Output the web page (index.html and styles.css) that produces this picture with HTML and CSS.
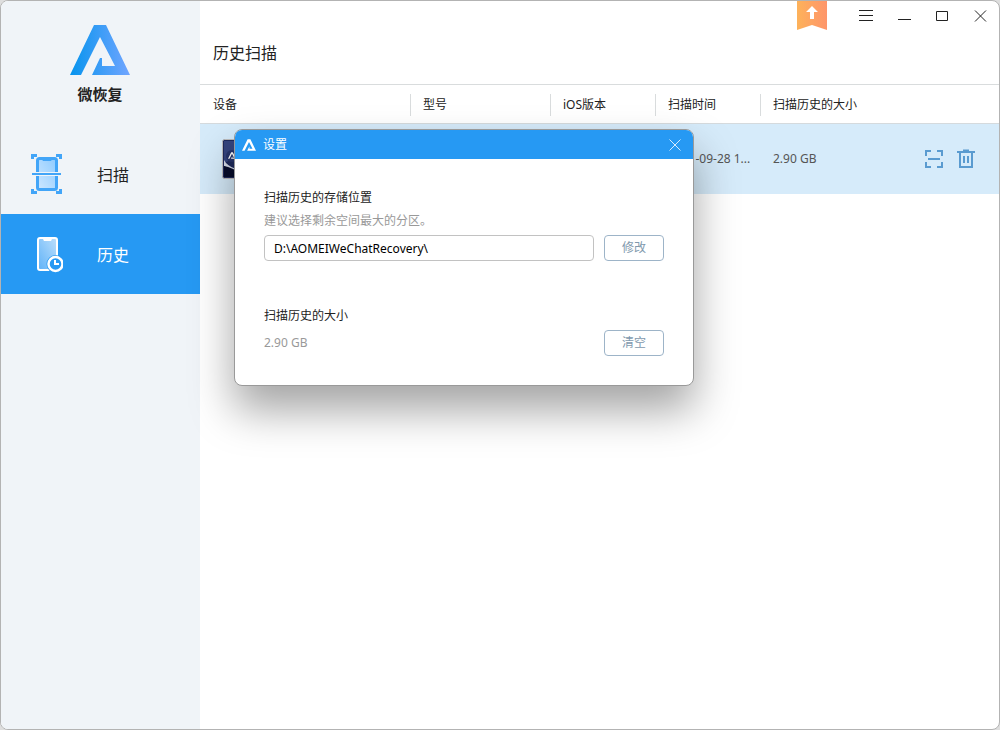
FILE: index.html
```html
<!DOCTYPE html>
<html lang="zh-CN">

<head>
    <meta charset="UTF-8">
    <title>微恢复</title>
    <link rel="stylesheet" href="styles.css">
</head>

<body>
    <svg width="0" height="0" class="defs">
        <defs>
            <symbol id="logo" viewBox="0 0 60 50">
                <path d="M24 0H36L60 50H22L31 33H32V41H45L30 12L11 50H0Z" />
            </symbol>
            <linearGradient id="blue" x1="0" y1="0" x2="1" y2="0">
                <stop offset="0" stop-color="#0694ee" />
                <stop offset="1" stop-color="#71a5ff" />
            </linearGradient>
            <linearGradient id="glass" x1="1" y1="0" x2="0" y2="1">
                <stop offset="0" stop-color="#8ecbff" />
                <stop offset="1" stop-color="#cde7ff" />
            </linearGradient>
            <linearGradient id="glass2" x1="1" y1="0" x2="0" y2="1">
                <stop offset="0" stop-color="#bcdffc" />
                <stop offset="1" stop-color="#5fb2f8" />
            </linearGradient>
            <linearGradient id="orange" x1="0" y1="0" x2="1" y2="0">
                <stop offset="0" stop-color="#fdb25a" />
                <stop offset="1" stop-color="#fe956a" />
            </linearGradient>
        </defs>
    </svg>

    <div class="window">
        <aside class="sidebar">
            <div class="brand">
                <svg width="60" height="50" fill="url(#blue)" viewBox="0 0 60 50">
                    <path d="M24 0H36L60 50H22L30 33H32V41H45L30 12L11 50H0Z" />
                </svg>
                <div class="brand_name">微恢复</div>
            </div>
            <nav>
                <a href="#" class="nav_item">
                    <svg width="32" height="40" viewBox="0 0 32 40">
                        <path d="M0 0H6V3H3V5H0ZM25 0H31V5H28V3H25ZM0 40H6V37H3V35H0ZM25 40H31V35H28V37H25Z" fill="#42a5f8" />
                        <rect x="6.500" y="4.500" width="19" height="31" rx="2" fill="url(#glass)" stroke="#42a5f8" stroke-width="3" />
                        <path d="M10 4H22L20 7H12Z" fill="#42a5f8" />
                        <path d="M4 18H28V22H4Z" fill="#f0f4f8" />
                        <path d="M1 19H30V21H1Z" fill="#42a5f8" />
                    </svg>
                    <span>扫描</span>
                </a>
                <a href="#" class="nav_item active">
                    <svg width="32" height="40" viewBox="0 0 32 40">
                        <rect x="7" y="4" width="19" height="32" rx="2" fill="url(#glass2)" stroke="#fff" stroke-width="2" />
                        <path d="M11 3H22L20 7H13Z" fill="#fff" />
                        <circle cx="24.500" cy="30" r="9" fill="#2699f3" />
                        <circle cx="24.500" cy="30" r="7" fill="#2699f3" stroke="#fff" stroke-width="2.500" />
                        <path d="M24 26V30H28" fill="none" stroke="#fff" stroke-width="2" />
                    </svg>
                    <span>历史</span>
                </a>
            </nav>
        </aside>

        <main class="main">
            <header class="top">
                <div class="titlebar">
                    <button type="button" class="upgrade" aria-label="升级">
                        <svg width="30" height="29" viewBox="0 0 30 29">
                            <path d="M0 0H30V29L15 24L0 29Z" fill="url(#orange)" />
                            <path d="M15 5L21 11H17V18H13V11H9Z" fill="#fff" />
                        </svg>
                    </button>
                    <button type="button" class="win_btn" aria-label="菜单">
                        <svg width="14" height="12" viewBox="0 0 14 12">
                            <path d="M0 .5H14M0 5.500H14M0 10.500H14" />
                        </svg>
                    </button>
                    <button type="button" class="win_btn" aria-label="最小化">
                        <svg width="14" height="12" viewBox="0 0 14 12">
                            <path d="M1 9.500H14" />
                        </svg>
                    </button>
                    <button type="button" class="win_btn" aria-label="最大化">
                        <svg width="14" height="12" viewBox="0 0 14 12">
                            <path d="M1.500 1.500H12.500V10.500H1.500Z" />
                        </svg>
                    </button>
                    <button type="button" class="win_btn" aria-label="关闭">
                        <svg width="14" height="12" viewBox="0 0 14 12">
                            <path d="M2 .5L13 11.500M13 .5L2 11.500" />
                        </svg>
                    </button>
                </div>
                <h1>历史扫描</h1>
            </header>

            <table class="history">
                <colgroup>
                    <col class="col_device">
                    <col class="col_model">
                    <col class="col_small">
                    <col class="col_small">
                    <col>
                </colgroup>
                <thead>
                    <tr>
                        <th><span>设备</span></th>
                        <th><span>型号</span></th>
                        <th><span>iOS版本</span></th>
                        <th><span>扫描时间</span></th>
                        <th><span>扫描历史的大小</span></th>
                    </tr>
                </thead>
                <tbody>
                    <tr>
                        <td>
                            <svg class="thumb" width="22" height="40" viewBox="0 0 22 40">
                                <rect x=".5" y=".5" width="21" height="39" rx="2" fill="#1f2a5c" stroke="#bdbcbc" />
                                <path d="M2 2H20V16L2 24Z" fill="#36457f" />
                                <path d="M2 21Q5 27 14 30L10 31L2 27Z" fill="#d5dbea" />
                                <path d="M2 27Q10 28 20 36V38H2Z" fill="#070d2c" />
                                <circle cx="10" cy="17" r="6" fill="#27346a" />
                                <use href="#logo" x="6" y="13" width="8" height="7" fill="#fff" />
                            </svg>
                        </td>
                        <td></td>
                        <td></td>
                        <td>2021-09-28 1...</td>
                        <td>
                            <div class="size_cell">
                                <span>2.90 GB</span>
                                <div class="actions">
                                    <button type="button" aria-label="扫描">
                                        <svg width="20" height="20" viewBox="0 0 20 20" fill="none" stroke="#5a9bd0" stroke-width="2">
                                            <path d="M2 7V2H7M13 2H18V7M18 13V18H13M7 18H2V13M4 10H16" />
                                        </svg>
                                    </button>
                                    <button type="button" aria-label="删除">
                                        <svg width="20" height="20" viewBox="0 0 20 20" fill="none" stroke="#5a9bd0" stroke-width="2">
                                            <path d="M1 3H19M7 1.500H13M4 3V18H16V3M8 7V14M12 7V14" />
                                        </svg>
                                    </button>
                                </div>
                            </div>
                        </td>
                    </tr>
                </tbody>
            </table>
        </main>

        <div class="dialog" role="dialog" aria-labelledby="dialog_title">
            <div class="dialog_head">
                <svg width="14" height="12" fill="#fff">
                    <use href="#logo" width="14" height="12" />
                </svg>
                <span id="dialog_title">设置</span>
                <button type="button" aria-label="关闭">
                    <svg width="12" height="12" viewBox="0 0 12 12">
                        <path d="M.5 .5L11.500 11.500M11.500 .5L.5 11.500" stroke="#d5ebfd" />
                    </svg>
                </button>
            </div>
            <div class="dialog_body">
                <section>
                    <label for="path">扫描历史的存储位置</label>
                    <p class="hint">建议选择剩余空间最大的分区。</p>
                    <div class="row">
                        <input type="text" id="path" value="D:\AOMEIWeChatRecovery\">
                        <button type="button" class="btn">修改</button>
                    </div>
                </section>
                <section>
                    <h2>扫描历史的大小</h2>
                    <div class="row">
                        <span class="size">2.90 GB</span>
                        <button type="button" class="btn">清空</button>
                    </div>
                </section>
            </div>
        </div>
    </div>
</body>

</html>
```
FILE: styles.css
```css
* {
    box-sizing: border-box;
}

body {
    margin: 0;
    background-color: #dedede;
    font-family: "Noto Sans", "Noto Sans CJK SC", sans-serif;
    font-size: 12px;
    line-height: 20px;
    color: #222;
}

h1,
h2,
p {
    margin: 0;
    font-size: 12px;
    font-weight: normal;
}

button {
    padding: 0;
    border: none;
    background: none;
    font: inherit;
    cursor: pointer;
}

svg {
    display: block;
}

.defs {
    position: absolute;
}

.window {
    position: relative;
    display: flex;
    min-height: 100vh;
    border: 1px solid #b3b3b3;
    border-radius: 8px;
    background-color: #fff;
    overflow: hidden;
}

/* sidebar */
.sidebar {
    flex: 0 0 199px;
    background-color: #f0f4f8;
}

.brand {
    display: flex;
    flex-direction: column;
    align-items: center;
    height: 133px;
    padding: 24px 1px 0 0;
}

.brand_name {
    margin-top: 9px;
    font-size: 15px;
    font-weight: bold;
}

.nav_item {
    display: flex;
    align-items: center;
    gap: 34px;
    height: 80px;
    padding-left: 30px;
    font-size: 16px;
    color: #222;
    text-decoration: none;
}

.nav_item span {
    padding-top: 2px;
}

.nav_item.active {
    background-color: #2699f3;
    color: #fff;
}

/* main area */
.main {
    flex: 1;
    min-width: 0;
}

.top {
    height: 84px;
    border-bottom: 1px solid #d9dcdd;
}

.titlebar {
    display: flex;
    justify-content: flex-end;
    height: 30px;
}

.upgrade {
    align-self: flex-start;
    margin-right: 20px;
}

.win_btn {
    display: flex;
    align-items: center;
    justify-content: center;
    width: 38px;
    height: 30px;
}

.win_btn svg {
    fill: none;
    stroke: #222;
}

h1 {
    padding: 10px 13px 0;
    font-size: 16px;
    line-height: 24px;
}

.history {
    width: 100%;
    table-layout: fixed;
    border-spacing: 0;
}

.col_device {
    width: 210px;
}

.col_model {
    width: 140px;
}

.col_small {
    width: 105px;
}

.history th {
    height: 39px;
    padding: 1px 0 0;
    border-bottom: 1px solid #d5dadd;
    font-weight: normal;
    text-align: left;
}

.history th span {
    display: block;
    padding-left: 12px;
    border-left: 1px solid #d9dcdd;
    line-height: 22px;
}

.history th:first-child span {
    border-color: transparent;
}

.history td {
    height: 70px;
    padding: 0 0 0 13px;
    background-color: #d6ebfa;
    color: #555;
    white-space: nowrap;
}

.thumb {
    margin-left: 9px;
}

.size_cell,
.actions {
    display: flex;
    align-items: center;
}

.size_cell {
    justify-content: space-between;
    padding-right: 23px;
}

.actions {
    gap: 12px;
}

/* settings dialog */
.dialog {
    position: absolute;
    top: 128px;
    left: 233px;
    width: 460px;
    border: 1px solid #999;
    border-radius: 8px;
    background-color: #fff;
    box-shadow: 0 24px 44px rgba(0, 0, 0, 0.36);
    overflow: hidden;
}

.dialog_head {
    display: flex;
    align-items: center;
    gap: 7px;
    height: 29px;
    padding: 0 12px 0 7px;
    background-color: #2699f3;
    color: #fff;
}

.dialog_head button {
    margin-left: auto;
}

.dialog_body {
    padding: 29px;
}

.dialog label {
    display: block;
}

.dialog section + section {
    margin-top: 45px;
}

.hint {
    margin-top: 3px;
    color: #999;
}

.row {
    display: flex;
    align-items: center;
    gap: 10px;
    margin-top: 4px;
}

.row input {
    flex: 1;
    min-width: 0;
    height: 26px;
    padding: 0 9px;
    border: 1px solid #c2c2c2;
    border-radius: 4px;
    font: inherit;
    color: #000;
}

.size {
    flex: 1;
    color: #999;
}

.btn {
    width: 60px;
    height: 26px;
    border: 1px solid #9db4c8;
    border-radius: 4px;
    color: #7f99ad;
}
```
